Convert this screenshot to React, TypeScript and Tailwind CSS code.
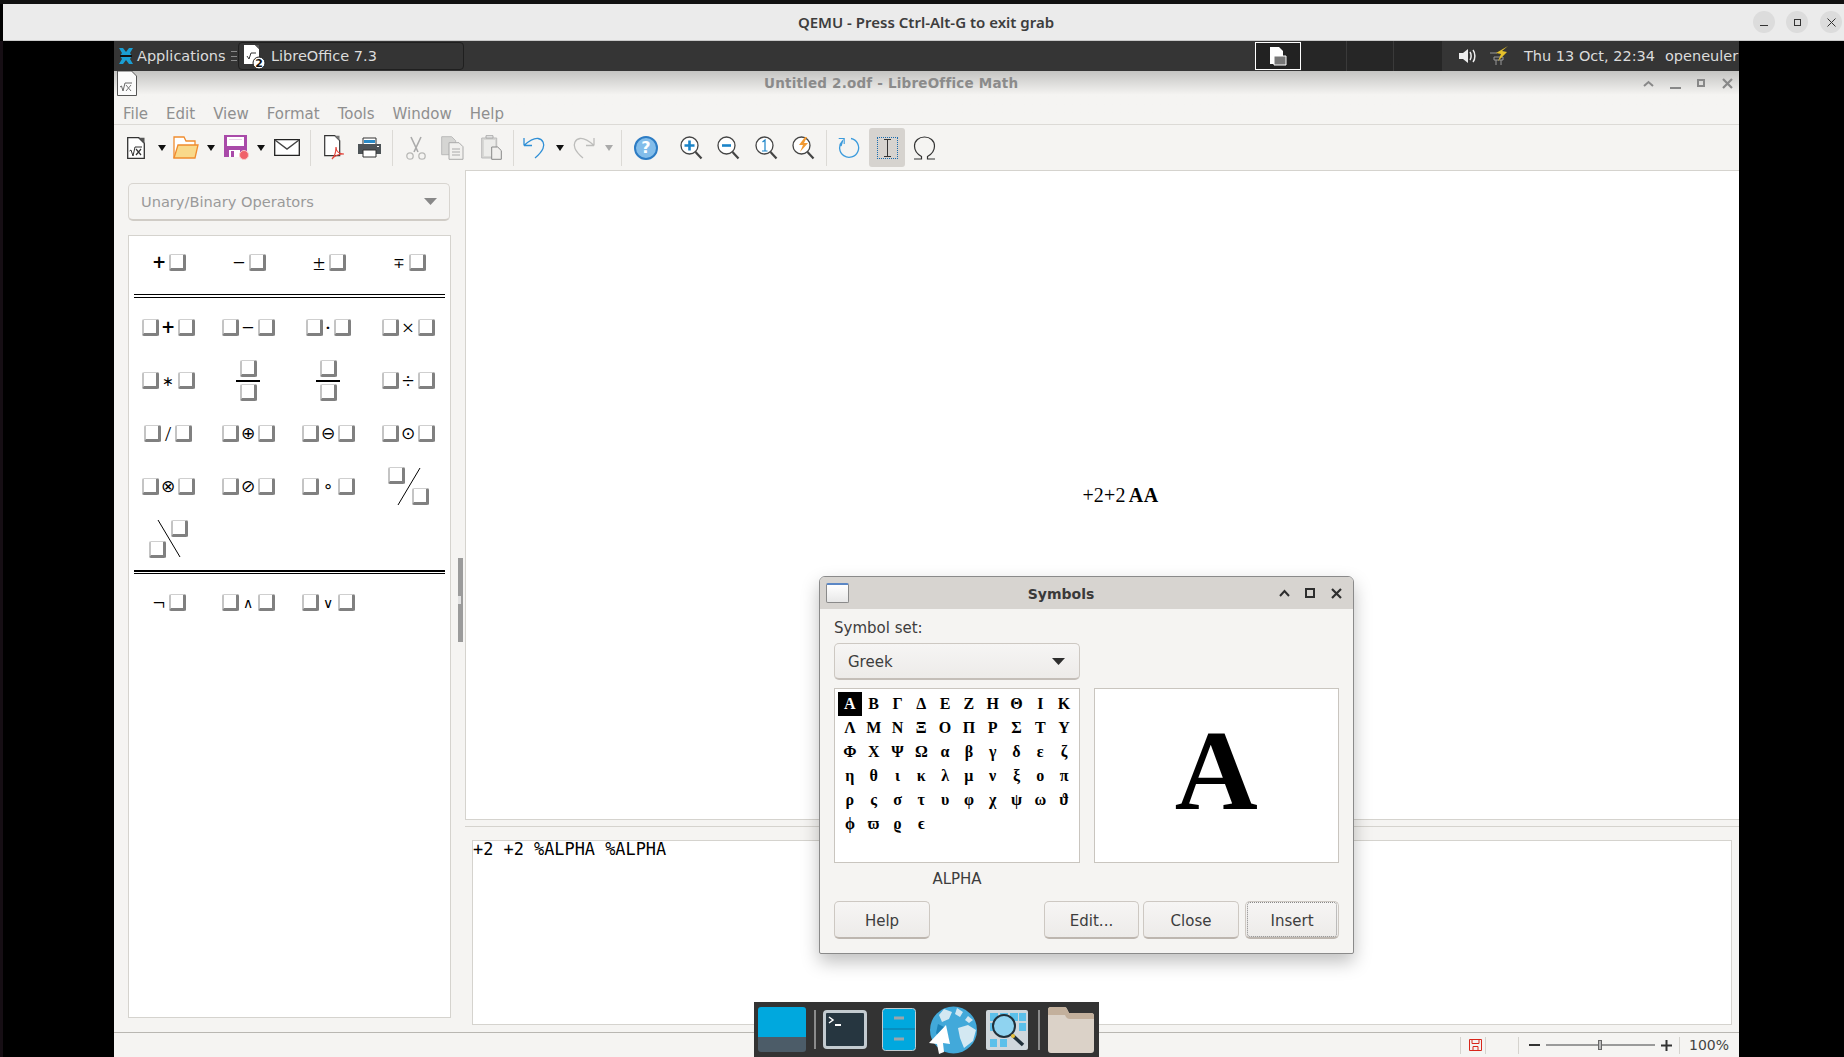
import React from "react";

const UI = "font-['DejaVu_Sans',sans-serif]";
const SERIF = "font-['Liberation_Serif',serif]";

function Caret({ dim = false }: { dim?: boolean }) {
  return (
    <svg width="8" height="6" viewBox="0 0 8 6" className="block">
      <path d="M0 0h8L4 6z" fill={dim ? "#aaa" : "#111"} />
    </svg>
  );
}

function Sep({ className }: { className: string }) {
  return <div className={`w-px h-[36px] bg-[#dcdad6] ${className}`} />;
}

function NewMath({ className }: { className: string }) {
  return (
    <svg width="18" height="22" viewBox="0 0 18 22" className={className}>
      <path d="M.7.7h11l5.600 5.600v15H.7z" fill="#fff" stroke="#333" strokeWidth="1.300" />
      <path d="M11.500.7h6v6z" fill="#555" />
      <path d="M2.500 14l1.500-1 2 6 2-9h7" fill="none" stroke="#333" strokeWidth="1" />
      <path d="M9 12l5 6M14 12l-5 6" stroke="#333" strokeWidth="1.200" />
    </svg>
  );
}

function Open({ className }: { className: string }) {
  return (
    <svg width="26" height="24" viewBox="0 0 26 24" className={className}>
      <path d="M1 22V1h10l2 4h9v5" fill="#fff" stroke="#f08c2e" strokeWidth="1.300" />
      <path d="M1 22l4-13h20l-3 13z" fill="#f9d98a" stroke="#f08c2e" strokeWidth="1.300" />
    </svg>
  );
}

function Save({ className }: { className: string }) {
  return (
    <svg width="25" height="25" viewBox="0 0 25 25" className={className}>
      <path d="M0 0h23v22H0z" fill="#a94aa9" />
      <path d="M3 2h17v9H3z" fill="#fff" />
      <path d="M5 4h13v1H5z" fill="#e8cfe8" />
      <path d="M5 15h11v7H5z" fill="#fff" />
      <path d="M7 16h3v6H7z" fill="#a94aa9" />
      <circle cx="20" cy="20" r="4.500" fill="#f0616a" stroke="#f8c8c8" strokeWidth="1" />
    </svg>
  );
}

function Mail({ className }: { className: string }) {
  return (
    <svg width="26" height="17" viewBox="0 0 26 17" className={className}>
      <path d="M.7.7h24.600v15.600H.7z" fill="#fff" stroke="#222" strokeWidth="1.300" />
      <path d="M1 1l12 9L25 1" fill="none" stroke="#444" strokeWidth="1.400" />
    </svg>
  );
}

function Pdf({ className }: { className: string }) {
  return (
    <svg width="21" height="25" viewBox="0 0 21 25" className={className}>
      <path d="M.7.7h10l5 5v15H.7z" fill="#fff" stroke="#333" strokeWidth="1.200" />
      <path d="M10.500.7h5v5z" fill="#777" />
      <path d="M8 24c3-3 4-8 4-12 0 4 3 7 8 7-5 0-9 1-12 5z" fill="none" stroke="#e2453c" strokeWidth="1.200" />
    </svg>
  );
}

function Print({ className }: { className: string }) {
  return (
    <svg width="23" height="21" viewBox="0 0 23 21" className={className}>
      <path d="M5 1h13v9H5z" fill="#fff" stroke="#333" />
      <path d="M6 3h11v3H6z" fill="#2b8ac6" />
      <path d="M0 7h23v10H0z" fill="#4d5357" />
      <path d="M5 13h13v7H5z" fill="#fff" stroke="#333" />
      <path d="M19 9h2v1h-2z" fill="#fff" />
    </svg>
  );
}

function Cut({ className }: { className: string }) {
  return (
    <svg width="20" height="24" viewBox="0 0 20 24" className={className}>
      <g fill="none" stroke="#b9b9b7" strokeWidth="1.300">
        <path d="M5 1l7 15M15 1L8 16" stroke="#aaa" strokeWidth="1.600" />
        <circle cx="4" cy="20" r="3.200" />
        <circle cx="16" cy="20" r="3.200" />
      </g>
    </svg>
  );
}

function Copy({ className }: { className: string }) {
  return (
    <svg width="23" height="24" viewBox="0 0 23 24" className={className}>
      <path d="M.7.7h10l4 4v14H.7z" fill="#d5d5d3" stroke="#bbb" />
      <path d="M8 6.700h10l4 4v12.600H8z" fill="#f1f0ee" stroke="#aaa" />
      <path d="M11 13h8M11 16h8M11 19h8" stroke="#aaa" />
    </svg>
  );
}

function Paste({ className }: { className: string }) {
  return (
    <svg width="21" height="25" viewBox="0 0 21 25" className={className}>
      <path d="M.7 3h15v20H.7z" fill="#d8d8d6" stroke="#bbb" />
      <path d="M5 3h7V.7H5z" fill="#eee" stroke="#aaa" />
      <path d="M3 5h11v16H3z" fill="#ececea" />
      <path d="M10.700 12h6l3.600 3.600v8.700h-9.600z" fill="#f1f0ee" stroke="#888" />
    </svg>
  );
}

function Undo({ className, color, flip = false }: { className: string; color: string; flip?: boolean }) {
  return (
    <svg width="23" height="22" viewBox="0 0 23 22" className={`${className} ${flip ? "-scale-x-100" : ""}`}>
      <path d="M1 8.500h8M1 8.500V1M1 8.500C6 4 10 1 15 1.500c5 .7 7 6 5 10-1.500 3.500-5 7-8 9.500" fill="none" stroke={color} strokeWidth="1.300" />
    </svg>
  );
}

function HelpIcon({ className }: { className: string }) {
  return (
    <div className={`w-[24px] h-[24px] rounded-full bg-[#83bdea] border-2 border-[#2d7cc4] flex items-center justify-center text-white font-bold text-[16px] leading-none ${UI} ${className}`}>
      ?
    </div>
  );
}

function Zoom({ className, kind }: { className: string; kind: "in" | "out" | "one" | "opt" }) {
  return (
    <svg width="23" height="24" viewBox="0 0 23 24" className={className}>
      <circle cx="9.500" cy="9.500" r="8.500" fill="#fff" stroke="#444" strokeWidth="1.300" />
      <path d="M15.500 16l6 6.500" stroke="#444" strokeWidth="2.200" />
      {kind === "in" && <path d="M4.500 9.500h10M9.500 4.500v10" stroke="#1b84c8" strokeWidth="2.600" />}
      {kind === "out" && <path d="M5 9.500h9" stroke="#1b84c8" strokeWidth="2.600" />}
      {kind === "one" && <path d="M7.500 6l2.500-2v11M7 15h5.500" fill="none" stroke="#1b84c8" strokeWidth="1.200" />}
      {kind === "opt" && <path d="M13 1l-6 8h4l-3 7 8-9h-4l3-6z" fill="#f29a33" />}
    </svg>
  );
}

function Refresh({ className }: { className: string }) {
  return (
    <svg width="22" height="22" viewBox="0 0 22 22" className={className}>
      <path d="M13 1.500a9.500 9.500 0 1 1-8.500 2.500L3 9" fill="none" stroke="#3c9bdc" strokeWidth="1.300" />
      <path d="M.7 1.500h5.500V7" fill="none" stroke="#3c9bdc" strokeWidth="1.100" />
    </svg>
  );
}

function Omega({ className }: { className: string }) {
  return (
    <svg width="23" height="24" viewBox="0 0 23 24" className={className}>
      <path d="M1 23h7.500v-2.500C4 18 1.500 14 1.500 10 1.500 4.500 6 1 11.500 1s10 3.500 10 9c0 4-2.500 8-7 10.500V23H22" fill="none" stroke="#333" strokeWidth="1.200" />
    </svg>
  );
}

function Sq({ className = "" }: { className?: string }) {
  return (
    <span className={`block w-[17px] h-[17px] shrink-0 bg-white rounded-[2px] border-t border-l-2 border-r-[3px] border-b-[3px] border-t-[#cfcfcf] border-l-[#c4c4c4] border-r-[#808080] border-b-[#808080] ${className}`} />
  );
}

const WIDE = "font-['Liberation_Serif',serif] text-[22px]";
const PLUS = "font-['DejaVu_Sans',sans-serif] font-bold text-[17px]";
const THIN = "font-['DejaVu_Sans',sans-serif] text-[17px] text-[#222]";
const SMALL = "font-['DejaVu_Sans',sans-serif] text-[14px]";

function Glyph({ g, w = "w-[19px]", font = WIDE }: { g: string; w?: string; font?: string }) {
  return <span className={`${w} flex justify-center leading-none text-black ${font}`}>{g}</span>;
}

function Bin({ g, w, font }: { g: string; w?: string; font?: string }) {
  return (
    <div className="flex items-center justify-center">
      <Sq />
      <Glyph g={g} w={w} font={font} />
      <Sq />
    </div>
  );
}

function Un({ g, font }: { g: string; font?: string }) {
  return (
    <div className="flex items-center justify-center">
      <Glyph g={g} w="w-[17px]" font={font} />
      <Sq className="ml-[1px]" />
    </div>
  );
}

function Frac() {
  return (
    <div className="flex flex-col items-center justify-center">
      <Sq />
      <span className="block w-[24px] h-[2px] bg-black mt-[3px] mb-[2px]" />
      <Sq />
    </div>
  );
}

function Slash({ back = false }: { back?: boolean }) {
  return back ? (
    <div className="relative">
      <Sq className="absolute left-[43px] top-[7px]" />
      <Sq className="absolute left-[21px] top-[28px]" />
      <svg width="80" height="53" viewBox="0 0 80 53" className="absolute inset-0">
        <path d="M30 7l22 37" stroke="#000" />
      </svg>
    </div>
  ) : (
    <div className="relative">
      <Sq className="absolute left-[20px] top-[7px]" />
      <Sq className="absolute left-[44px] top-[28px]" />
      <svg width="80" height="53" viewBox="0 0 80 53" className="absolute inset-0">
        <path d="M52 8L30 45" stroke="#000" />
      </svg>
    </div>
  );
}

function OperatorPanel() {
  return (
    <div className="w-[323px] h-[783px] mt-[14px] bg-white border border-[#d5d3ce]">
      <div className="grid grid-cols-[repeat(4,80px)] auto-rows-[53px] -ml-px">
        <Un g="+" font={PLUS} />
        <Un g="−" />
        <Un g="±" />
        <Un g="∓" font={SMALL} />
      </div>
      <div className="mx-[5px] mt-[5px] h-[4px] border-y border-black" />
      <div className="grid grid-cols-[repeat(4,80px)] auto-rows-[53px] mt-[3px] -ml-px">
        <Bin g="+" font={PLUS} />
        <Bin g="−" />
        <Bin g="·" w="w-[11px]" />
        <Bin g="×" />
        <Bin g="∗" font={SMALL} />
        <Frac />
        <Frac />
        <Bin g="÷" />
        <Bin g="/" w="w-[14px]" />
        <Bin g="⊕" font={THIN} />
        <Bin g="⊖" font={THIN} />
        <Bin g="⊙" font={THIN} />
        <Bin g="⊗" font={THIN} />
        <Bin g="⊘" font={THIN} />
        <Bin g="∘" font={THIN} />
        <Slash />
        <Slash back />
      </div>
      <div className="mx-[5px] mt-[4px] h-[4px] border-t-2 border-b border-black" />
      <div className="grid grid-cols-[repeat(4,80px)] auto-rows-[53px] mt-[2px] -ml-px">
        <Un g="¬" />
        <Bin g="∧" font={SMALL} />
        <Bin g="∨" font={SMALL} />
      </div>
    </div>
  );
}

const GREEK = "ΑΒΓΔΕΖΗΘΙΚΛΜΝΞΟΠΡΣΤΥΦΧΨΩαβγδεζηθικλμνξοπρςστυφχψωϑϕϖϱϵ".split("");

function DialogButton({ label, className, focus = false }: { label: string; className: string; focus?: boolean }) {
  return (
    <div className={`h-[38px] rounded-[5px] border border-[#cdc8c2] border-b-2 border-b-[#bdb6af] bg-gradient-to-b from-[#f6f5f4] to-[#edebe9] flex items-center justify-center text-[15px] text-[#3d3d3d] ${className}`}>
      {focus ? (
        <span className="w-full h-full m-[1px] pt-[4px] border border-dotted border-[#888] rounded-[3px] flex items-center justify-center">{label}</span>
      ) : (
        <span className="pt-[4px]">{label}</span>
      )}
    </div>
  );
}

function SymbolsDialog() {
  return (
    <div className={`absolute left-[819px] top-[576px] w-[535px] h-[378px] bg-[#f5f4f2] border border-[#8a8a8a] rounded-t-[6px] rounded-b-[2px] shadow-[0_8px_18px_rgba(0,0,0,0.25)] ${UI}`}>
      <div className="h-[32px] bg-[#d7d4d0] rounded-t-[5px] flex items-center relative">
        <div className="ml-[6px] w-[23px] h-[20px] rounded-[2px] border border-[#8a8a8a] bg-gradient-to-b from-[#ffffff] to-[#e8e8e8] border-t-2 border-t-[#5b87c5]" />
        <span className="absolute left-0 top-[7px] w-[482px] text-center text-[14px] font-bold text-[#3a3a3a]">Symbols</span>
        <svg width="11" height="8" viewBox="0 0 11 8" className="ml-[430px]">
          <path d="M1 7l4.500-5L10 7" fill="none" stroke="#2e2e2e" strokeWidth="2" />
        </svg>
        <div className="ml-[15px] w-[10px] h-[10px] border-2 border-[#2e2e2e]" />
        <svg width="11" height="11" viewBox="0 0 11 11" className="ml-[16px]">
          <path d="M1 1l9 9M10 1l-9 9" stroke="#2e2e2e" strokeWidth="2.200" />
        </svg>
      </div>
      <div className="px-[14px]">
        <div className="mt-[8px] h-[20px] pt-[1px] text-[15px] leading-[20px] text-[#3d3d3d]">Symbol set:</div>
        <div className="mt-[6px] w-[246px] h-[37px] rounded-[5px] border border-[#cdc8c2] border-b-2 border-b-[#c4beb8] bg-gradient-to-b from-[#f6f5f4] to-[#edebe9] flex items-center justify-between pl-[13px] pr-[14px] text-[15px] text-[#3d3d3d]">
          <span className="pt-[3px]">Greek</span>
          <svg width="13" height="7" viewBox="0 0 13 7">
            <path d="M0 0h13L6.500 7z" fill="#2e2e2e" />
          </svg>
        </div>
        <div className="mt-[8px] flex gap-[14px]">
          <div className={`w-[246px] h-[175px] bg-white border border-[#c9c5bf] pt-[3px] pl-[3px] grid grid-cols-[repeat(10,23.8px)] auto-rows-[24px] content-start text-[16px] font-bold text-black ${SERIF}`}>
            {GREEK.map((c, i) => (
              <span key={c} className={`flex items-center justify-center leading-none ${i === 0 ? "bg-black text-white" : ""}`}>
                {c}
              </span>
            ))}
          </div>
          <div className={`w-[246px] h-[175px] pb-[10px] bg-white border border-[#c9c5bf] flex items-center justify-center text-[115px] font-bold leading-none text-black ${SERIF}`}>
            Α
          </div>
        </div>
        <div className="w-[246px] h-[32px] pt-[1px] flex items-center justify-center text-[15px] text-[#3d3d3d]">ALPHA</div>
        <div className="mt-[6px] flex">
          <DialogButton label="Help" className="w-[96px]" />
          <DialogButton label="Edit..." className="w-[95px] ml-[114px]" />
          <DialogButton label="Close" className="w-[96px] ml-[4px]" />
          <DialogButton label="Insert" className="w-[94px] ml-[6px]" focus />
        </div>
      </div>
    </div>
  );
}

function Dock() {
  return (
    <div className="absolute left-[754px] top-[1002px] w-[345px] h-[55px] bg-[#333333] flex items-center">
      <div className="ml-[4px] w-[48px] h-[45px] rounded-[3px] overflow-hidden flex flex-col">
        <div className="h-[30px] bg-[#00a8de]" />
        <div className="flex-1 bg-[#4c5c68]" />
      </div>
      <div className="ml-[8px] w-[2px] h-[39px] bg-[#8b8b8b]" />
      <svg width="44" height="39" viewBox="0 0 44 39" className="ml-[7px]">
        <rect x="1.500" y="1.500" width="41" height="36" rx="2.500" fill="#263640" stroke="#c3cbd0" strokeWidth="3" />
        <path d="M6 7l4 3-4 3" fill="none" stroke="#fff" strokeWidth="1.500" />
        <path d="M12 15h6" stroke="#fff" strokeWidth="2" />
      </svg>
      <svg width="34" height="43" viewBox="0 0 34 43" className="ml-[15px]">
        <rect x="0.500" y="0.500" width="33" height="42" rx="3" fill="#00a8de" stroke="#c3cbd0" />
        <path d="M1 21h32" stroke="#0a86b4" strokeWidth="1.500" />
        <path d="M12 10h10M12 31h10" stroke="#9aa5ab" strokeWidth="3" />
      </svg>
      <svg width="47" height="48" viewBox="0 0 47 48" className="ml-[14px]">
        <circle cx="23.500" cy="24" r="23.500" fill="#42a9da" />
        <path d="M14 3l8 3-3 7-7 3-3-7zM27 2l6 4-3 5-5-3zM28 22l10-3 8 5-3 11-9 7-4-10zM38 10l5 4-4 3-4-3z" fill="#d3e8f2" />
        <path d="M8 18l8 4 3 12-6 3-7-10z" fill="#1d83b8" />
      </svg>
      <svg width="42" height="40" viewBox="0 0 42 40" className="ml-[9px]">
        <rect width="42" height="40" rx="2" fill="#cfd7dc" />
        <path d="M4 3h8v8H4zM14 3h8v8h-8zM24 3h8v8h-8zM33 3h7v8h-7zM33 13h7v8h-7zM4 13h8v8H4zM4 29h7v8H4zM14 29h7v8h-7z" fill="#5cc0ea" />
        <circle cx="18" cy="16" r="11" fill="#8fd3f0" stroke="#20303a" strokeWidth="2" />
        <path d="M26 25l11 10" stroke="#20303a" strokeWidth="3.500" />
        <circle cx="27" cy="26" r="2" fill="#e8c33e" />
      </svg>
      <div className="ml-[10px] w-[2px] h-[40px] bg-[#8b8b8b]" />
      <svg width="46" height="46" viewBox="0 0 46 46" className="ml-[8px]">
        <path d="M0 3a3 3 0 0 1 3-3h13a3 3 0 0 1 3 2l2 4h22a3 3 0 0 1 3 3v34a3 3 0 0 1-3 3H3a3 3 0 0 1-3-3z" fill="#dbd2c8" />
        <path d="M0 3a3 3 0 0 1 3-3h13a3 3 0 0 1 3 2l2 4h22a3 3 0 0 1 3 3v3H22c-2 0-3-1-4-2l-1-2H0z" fill="#c3b09c" />
      </svg>
      <svg width="23" height="30" viewBox="0 0 23 30" className="absolute left-[175px] top-[23px]">
        <path d="M17 0L0 18l8 1 2 10 5-2-1-9 7 1z" fill="#fff" />
      </svg>
    </div>
  );
}

export default function App() {
  return (
    <div className={`relative w-[1844px] h-[1057px] overflow-hidden bg-black flex flex-col ${UI}`}>
      <div className="h-[4px] bg-[#111111] shrink-0" />
      <div className="h-[37px] ml-[3px] bg-[#ebebeb] border-b border-[#c9c9c9] shrink-0 flex items-center relative font-['Noto_Sans',sans-serif]">
        <span className="w-full pl-[5px] text-center text-[15px] font-semibold text-[#3d3d3d]">QEMU - Press Ctrl-Alt-G to exit grab</span>
        <div className="absolute left-[1750px] top-[7px] w-[22px] h-[22px] rounded-full bg-[#dcdcdc] flex items-center justify-center">
          <span className="w-[8px] h-px bg-[#333] mt-[6px]" />
        </div>
        <div className="absolute left-[1783px] top-[7px] w-[22px] h-[22px] rounded-full bg-[#dcdcdc] flex items-center justify-center">
          <span className="w-[7px] h-[7px] border border-[#333]" />
        </div>
        <div className="absolute left-[1817px] top-[7px] w-[22px] h-[22px] rounded-full bg-[#dcdcdc] flex items-center justify-center">
          <svg width="9" height="9" viewBox="0 0 9 9">
            <path d="M.5.500l8 8M8.500.500l-8 8" stroke="#333" />
          </svg>
        </div>
      </div>

      <div className="flex-1 flex min-h-0">
        <div className="w-[3px] bg-[#160e14]" />
        <div className="w-[111px]" />
        <div className="w-[1625px] flex flex-col">
          {/* guest panel */}
          <div className="h-[30px] shrink-0 bg-[#353535] flex items-center text-[#dcdcdc] text-[14.500px] whitespace-nowrap overflow-hidden">
            <svg width="16" height="18" viewBox="0 0 16 18" className="ml-[4px]">
              <path d="M1 1h4l3 4 3-4h4l-3 5 2 3-2 3 3 5h-4l-3-4-3 4H1l3-5-2-3 2-3z" fill="#1a9fd4" />
              <path d="M2 8h12v2H2z" fill="#111" />
            </svg>
            <span className="ml-[3px] w-[89px] pt-[1px]">Applications</span>
            <span className="ml-[5px] w-[6px] h-[10px] border-y border-[#888] flex items-center">
              <span className="block w-full h-px bg-[#888]" />
            </span>
            <div className="ml-[1px] w-[226px] h-[28px] bg-[#343434] border border-[#1f1f1f] rounded-[4px] flex items-center">
              <svg width="24" height="26" viewBox="0 0 24 26" className="ml-[4px]">
                <path d="M1 2h11l4 4v15H1z" fill="#fff" />
                <path d="M12 2h4v4z" fill="#555" />
                <path d="M4 13l2 3 2-6h5" fill="none" stroke="#333" />
                <circle cx="16" cy="20" r="6" fill="#fff" stroke="#222" />
                <text x="16" y="24" fontSize="11" fontWeight="bold" textAnchor="middle" fill="#111">2</text>
              </svg>
              <span className="ml-[4px] pt-[1px]">LibreOffice 7.3</span>
            </div>
            <div className="ml-[791px] w-[46px] h-[28px] border border-white bg-[#222222] flex items-center justify-center">
              <svg width="18" height="20" viewBox="0 0 18 20">
                <path d="M1 1h9l4 4v5H8v8H1z" fill="#fff" />
                <path d="M5 10h12v9H5z" fill="#777" stroke="#fff" />
              </svg>
            </div>
            <div className="w-[141px] h-full bg-[#262626] flex">
              <div className="ml-[45px] w-px h-full bg-[#3a3a3a]" />
              <div className="ml-[46px] w-px h-full bg-[#3a3a3a]" />
            </div>
            <svg width="18" height="16" viewBox="0 0 18 16" className="ml-[17px]">
              <path d="M0 5h4l5-4v14l-5-4H0z" fill="#eee" />
              <path d="M11 4c1.500 2 1.500 6 0 8M14 2c2.500 3 2.500 9 0 12" fill="none" stroke="#eee" strokeWidth="1.500" />
            </svg>
            <svg width="20" height="20" viewBox="0 0 20 20" className="ml-[12px]">
              <path d="M1 7h7M5 14h9v-3H5zM7 14v5M12 14v5" stroke="#999" fill="none" />
              <path d="M19 0L7 7l5 1-3 7 9-9-5-1z" fill="#e5c12c" />
            </svg>
            <span className="ml-[15px] w-[129px] pt-[1px]">Thu 13 Oct, 22:34</span>
            <span className="ml-[12px] pt-[1px]">openeuler</span>
          </div>

          {/* LibreOffice window */}
          <div className="flex-1 min-h-0 bg-[#f5f4f2] flex flex-col relative">
            <div className="h-[54px] shrink-0 bg-gradient-to-b from-[#c4c4c2] to-[#f5f4f2] to-[45%] border-b border-[#dcdad6] relative">
              <div className="h-[24px] flex items-center relative">
                <span className="absolute left-[650px] text-[13.500px] font-bold text-[#8b8b8b] tracking-[0.2px]">Untitled 2.odf - LibreOffice Math</span>
                <svg width="11" height="7" viewBox="0 0 11 7" className="absolute left-[1529px]">
                  <path d="M1 6l4.500-4L10 6" fill="none" stroke="#888" strokeWidth="2" />
                </svg>
                <div className="absolute left-[1556px] top-[16px] w-[11px] h-[2px] bg-[#888]" />
                <div className="absolute left-[1583px] top-[8px] w-[8px] h-[8px] border-2 border-[#888]" />
                <svg width="11" height="11" viewBox="0 0 11 11" className="absolute left-[1608px]">
                  <path d="M1 1l9 9M10 1l-9 9" stroke="#888" strokeWidth="2.200" />
                </svg>
              </div>
              <svg width="20" height="25" viewBox="0 0 20 25" className="absolute left-[3px] top-0">
                <path d="M.5 0h14l5 5v19.500H.5z" fill="#fbfbfb" stroke="#555" />
                <path d="M3 16l1.500-1 1.500 5 2-8h7" fill="none" stroke="#666" />
                <path d="M9 14l5 6M14 14l-5 6" stroke="#777" />
              </svg>
              <div className="flex text-[15px] text-[#8f8f8f] mt-[7px] leading-[24px]">
                <span className="ml-[9px]">File</span>
                <span className="ml-[18px]">Edit</span>
                <span className="ml-[18px]">View</span>
                <span className="ml-[18px]">Format</span>
                <span className="ml-[18px]">Tools</span>
                <span className="ml-[18px]">Window</span>
                <span className="ml-[18px]">Help</span>
              </div>
            </div>

            {/* toolbar */}
            <div className="h-[45px] shrink-0 flex items-center">
              <NewMath className="ml-[13px]" />
              <div className="ml-[13px]"><Caret /></div>
              <Open className="ml-[7px]" />
              <div className="ml-[8px]"><Caret /></div>
              <Save className="ml-[9px]" />
              <div className="ml-[8px]"><Caret /></div>
              <Mail className="ml-[9px]" />
              <Sep className="ml-[10px]" />
              <Pdf className="ml-[13px]" />
              <Print className="ml-[13px]" />
              <Sep className="ml-[11px]" />
              <Cut className="ml-[13px]" />
              <Copy className="ml-[15px]" />
              <Paste className="ml-[17px]" />
              <Sep className="ml-[11px]" />
              <Undo className="ml-[9px]" color="#2f8fd6" />
              <div className="ml-[10px]"><Caret /></div>
              <Undo className="ml-[8px]" color="#bdbdbb" flip />
              <div className="ml-[10px]"><Caret dim /></div>
              <Sep className="ml-[8px]" />
              <HelpIcon className="ml-[12px]" />
              <Zoom className="ml-[22px]" kind="in" />
              <Zoom className="ml-[14px]" kind="out" />
              <Zoom className="ml-[15px]" kind="one" />
              <Zoom className="ml-[14px]" kind="opt" />
              <Sep className="ml-[11px]" />
              <Refresh className="ml-[11px]" />
              <div className="ml-[9px] w-[36px] h-[39px] bg-[#d6d3cf] rounded-[3px] flex items-center justify-center">
                <div className="w-[21px] h-[22px] border border-dotted border-[#1b6db0] flex items-center justify-center">
                  <svg width="7" height="18" viewBox="0 0 7 18">
                    <path d="M0 .5h7M0 17.500h7M3.500 0v18" stroke="#333" />
                  </svg>
                </div>
              </div>
              <Omega className="ml-[8px]" />
            </div>

            {/* main */}
            <div className="flex-1 min-h-0 flex">
              <div className="w-[344px] pl-[14px] pt-[13px] shrink-0">
                <div className="w-[322px] h-[38px] rounded-[5px] border border-[#d8d5d0] border-b-2 border-b-[#d0ccc6] bg-[#f5f4f2] flex items-center justify-between pl-[12px] pr-[12px] text-[14.600px] text-[#9a9a9a]">
                  <span className="pt-[1px]">Unary/Binary Operators</span>
                  <svg width="13" height="7" viewBox="0 0 13 7">
                    <path d="M0 0h13L6.500 7z" fill="#888" />
                  </svg>
                </div>
                <OperatorPanel />
              </div>
              <div className="w-[7px] shrink-0">
                <div className="w-[5px] h-[84px] mt-[388px] bg-[#9b9b9b] flex items-center">
                  <span className="block w-[3px] h-[8px] bg-[#e2e2e2]" />
                </div>
              </div>
              <div className="flex-1 min-w-0 flex flex-col">
                <div className={`h-[650px] shrink-0 bg-white border-l border-t border-b border-[#d5d3ce] flex items-center justify-center pl-[36px] text-[20px] text-black ${SERIF}`}>
                  <span className="tracking-[0.2px]">+2+2</span>
                  <span className="font-bold ml-[3px] tracking-[0.5px]">ΑΑ</span>
                </div>
                <div className="h-[7px] shrink-0 border-b border-[#d5d3ce]" />
                <div className="h-[13px] shrink-0" />
                <div className="mx-[7px] h-[185px] shrink-0 bg-white border border-[#d5d3ce] font-['DejaVu_Sans_Mono',monospace] text-[16.900px] leading-[16px] text-black">
                  +2 +2 %ALPHA %ALPHA
                </div>
              </div>
            </div>

            {/* status bar */}
            <div className="h-[25px] shrink-0 border-t border-[#b9b7b2] flex items-center">
              <div className="ml-[1346px] w-px h-[17px] bg-[#d5d3ce]" />
              <svg width="13" height="12" viewBox="0 0 13 12" className="ml-[8px]">
                <path d="M.5.500h12v11H.5zM3 .500v4h7v-4M4 11.500v-4h5v4" fill="none" stroke="#d8271c" />
              </svg>
              <div className="ml-[3px] w-px h-[17px] bg-[#d5d3ce]" />
              <div className="ml-[32px] w-px h-[17px] bg-[#d5d3ce]" />
              <div className="ml-[10px] w-[11px] h-[2px] bg-[#333]" />
              <div className="ml-[6px] w-[109px] h-[2px] bg-[#9a9a9a] relative">
                <div className="absolute left-[52px] -top-[4px] w-[4px] h-[10px] bg-[#bbb] border border-[#666]" />
              </div>
              <svg width="11" height="11" viewBox="0 0 11 11" className="ml-[6px]">
                <path d="M0 5.500h11M5.500 0v11" stroke="#333" strokeWidth="2" />
              </svg>
              <div className="ml-[7px] w-px h-[17px] bg-[#d5d3ce]" />
              <span className="ml-[9px] text-[14px] text-[#444]">100%</span>
            </div>
          </div>
        </div>
      </div>

      <SymbolsDialog />
      <Dock />
    </div>
  );
}
